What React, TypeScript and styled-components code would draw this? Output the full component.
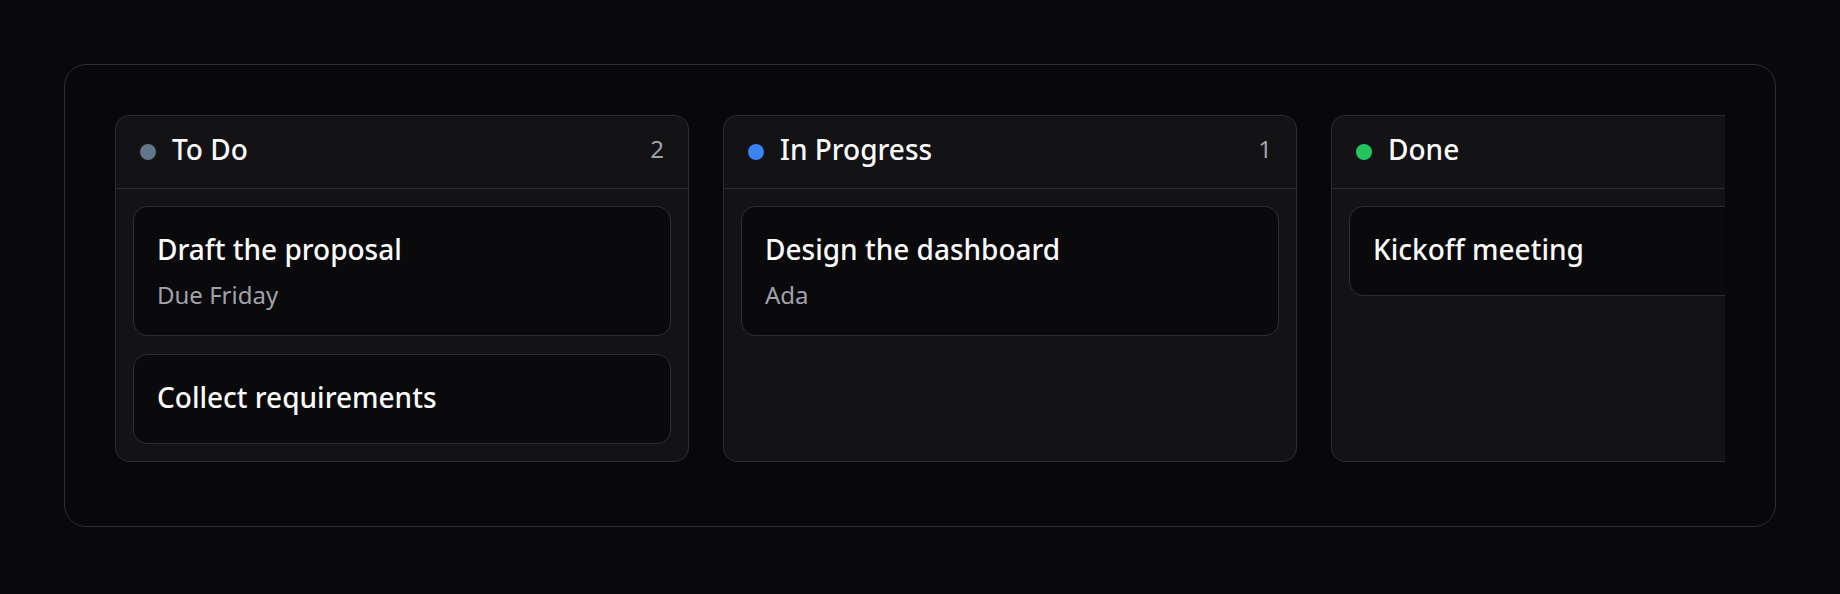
import React from "react";
import styled, { createGlobalStyle } from "styled-components";

const GlobalStyle = createGlobalStyle`
  * { box-sizing: border-box; }
  html, body {
    margin: 0;
    padding: 0;
    background: #09090b;
    font-family: "Noto Sans", "Open Sans", sans-serif;
    color: #fafafa;
  }
`;

const Page = styled.div`
  padding: 64px;
  width: 1840px;
  height: 594px;
`;

const Board = styled.section`
  border: 1px solid #2e2e32;
  border-radius: 22px;
  background: #08080a;
  padding: 50px 50px 49px;
`;

const Track = styled.div`
  display: flex;
  gap: 34px;
  overflow: hidden;
  padding-bottom: 15px;
  align-items: stretch;
`;

const Column = styled.div`
  flex: 0 0 574px;
  display: flex;
  flex-direction: column;
  background: #131315;
  border: 1px solid #2c2c30;
  border-radius: 14px;
`;

const ColumnHeader = styled.header`
  display: flex;
  align-items: center;
  gap: 16px;
  padding: 12px 24px 13px;
  border-bottom: 1px solid #2c2c30;
`;

const Dot = styled.span<{ $color: string }>`
  flex: 0 0 16px;
  width: 16px;
  height: 16px;
  border-radius: 50%;
  background: ${(p) => p.$color};
`;

const ColumnTitle = styled.h2`
  margin: 0 0 5px;
  font-size: 28px;
  line-height: 42px;
  font-weight: 500;
  color: #fafafa;
  white-space: nowrap;
`;

const Count = styled.span`
  margin: 0 0 5px auto;
  font-size: 24px;
  line-height: 42px;
  color: #a1a1aa;
`;

const CardList = styled.div`
  display: flex;
  flex-direction: column;
  gap: 18px;
  padding: 17px;
`;

const Card = styled.article`
  background: #0a0a0c;
  border: 1px solid #2e2e32;
  border-radius: 14px;
  padding: 21px 23px 25px;
`;

const CardTitle = styled.div`
  font-size: 28px;
  line-height: 42px;
  font-weight: 500;
  color: #fafafa;
  white-space: nowrap;
`;

const CardMeta = styled.div`
  margin: 8px 0 -2px;
  font-size: 24px;
  line-height: 34px;
  color: #a1a1aa;
`;

type Task = { title: string; meta?: string };
type Col = { name: string; color: string; count?: number; tasks: Task[] };

const columns: Col[] = [
  {
    name: "To Do",
    color: "#64748b",
    count: 2,
    tasks: [
      { title: "Draft the proposal", meta: "Due Friday" },
      { title: "Collect requirements" },
    ],
  },
  {
    name: "In Progress",
    color: "#3b82f6",
    count: 1,
    tasks: [{ title: "Design the dashboard", meta: "Ada" }],
  },
  {
    name: "Done",
    color: "#22c55e",
    tasks: [{ title: "Kickoff meeting" }],
  },
];

export default function App() {
  return (
    <>
      <GlobalStyle />
      <Page>
        <Board>
          <Track>
            {columns.map((c) => (
              <Column key={c.name}>
                <ColumnHeader>
                  <Dot $color={c.color} />
                  <ColumnTitle>{c.name}</ColumnTitle>
                  {c.count !== undefined && <Count>{c.count}</Count>}
                </ColumnHeader>
                <CardList>
                  {c.tasks.map((t) => (
                    <Card key={t.title}>
                      <CardTitle>{t.title}</CardTitle>
                      {t.meta && <CardMeta>{t.meta}</CardMeta>}
                    </Card>
                  ))}
                </CardList>
              </Column>
            ))}
          </Track>
        </Board>
      </Page>
    </>
  );
}
